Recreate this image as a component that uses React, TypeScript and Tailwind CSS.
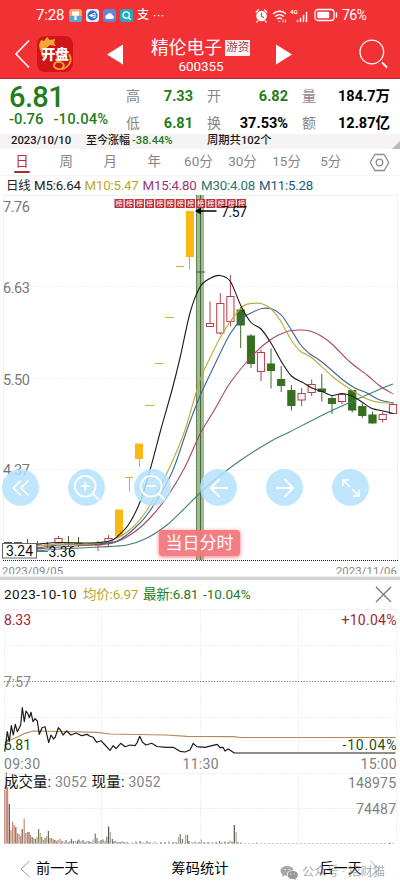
import type { ReactNode } from 'react';
import { ZoomIn, ZoomOut, ArrowLeft, ArrowRight } from 'lucide-react';

const quotes = [
  { label: '高', value: '7.33', color: 'text-[#1f7d1a]' },
  { label: '开', value: '6.82', color: 'text-[#1f7d1a]' },
  { label: '量', value: '184.7万', color: 'text-black' },
  { label: '低', value: '6.81', color: 'text-[#1f7d1a]' },
  { label: '换', value: '37.53%', color: 'text-black' },
  { label: '额', value: '12.87亿', color: 'text-black' },
];

const periods = ['日', '周', '月', '年', '60分', '30分', '15分', '5分'];

// x, high, low, body top, body bottom, rising
type Candle = [number, number, number, number, number, boolean];
const candles: Candle[] = [
  [58.5, 536, 544, 538.5, 543, true],
  [98, 541, 551, 544, 545, true],
  [108.5, 535, 547, 538.5, 543, true],
  [210, 301.5, 327, 323.5, 326.5, true],
  [220.3, 293, 334.5, 303.5, 333, true],
  [230.4, 275, 326.5, 296.5, 321.5, true],
  [240.7, 307, 348, 310, 325, false],
  [251, 334, 368, 336, 363.5, false],
  [261, 349.5, 381, 352.5, 371.5, true],
  [271, 348.5, 388.5, 364, 370.5, false],
  [281.2, 366, 392, 379.5, 385.5, false],
  [291.4, 385, 410.5, 390.5, 405.5, false],
  [301.6, 388, 406, 393.5, 400, true],
  [311.7, 379.5, 396, 384.5, 392.5, true],
  [321.8, 374, 401.5, 389, 391.5, false],
  [332, 395, 414, 398.5, 403.5, false],
  [342, 393, 404, 394.5, 401.5, true],
  [352.2, 390, 412.5, 390.5, 410, false],
  [362.3, 403.5, 418, 406.5, 415.5, false],
  [372.5, 411.5, 423.5, 415, 423, false],
  [382.7, 412, 422.5, 414.5, 419.5, true],
  [393, 402, 413.5, 404.5, 413.5, true],
];

// smoothed line through points
function smooth(pts: number[][]) {
  let d = `M${pts[0][0]} ${pts[0][1]}`;
  for (let i = 0; i < pts.length - 1; i++) {
    const p0 = pts[i - 1] ?? pts[i];
    const p1 = pts[i];
    const p2 = pts[i + 1];
    const p3 = pts[i + 2] ?? p2;
    d += `C${p1[0] + (p2[0] - p0[0]) / 7} ${p1[1] + (p2[1] - p0[1]) / 7} ${p2[0] - (p3[0] - p1[0]) / 7} ${p2[1] - (p3[1] - p1[1]) / 7} ${p2[0]} ${p2[1]}`;
  }
  return d;
}

const averages = [
  { color: '#3f8076', pts: [[37, 551], [60, 549], [100, 547], [127, 545], [147, 538], [167, 525], [183, 510], [200, 493], [217, 478], [240, 460.7], [270, 441.7], [290, 431.7], [333, 410], [378, 390], [393, 384]] },
  { color: '#a2456f', pts: [[37, 549], [60, 547], [90, 545], [113, 543], [133, 533], [150, 518], [167, 497], [185, 467], [200, 434], [215, 409], [230, 383], [253, 355], [270, 340], [287, 331.5], [300, 330], [310, 331], [322, 336.5], [333, 345], [350, 362], [367, 375], [380, 386], [393, 394]] },
  { color: '#3c6890', pts: [[37, 548], [60, 545], [90, 544], [117, 541], [140, 523], [157, 500], [173, 470], [188, 427], [200, 396], [215, 364], [230, 334], [243, 318], [253, 312], [262, 308.5], [272, 309], [283, 317], [300, 344], [310, 354], [322, 362], [343, 380], [355, 388], [367, 393], [380, 400], [393, 403]] },
  { color: '#bcaa37', pts: [[37, 546], [60, 544], [90, 544], [115, 539], [133, 527], [147, 510], [160, 487], [173, 460], [185, 430], [200, 380], [210, 358], [220, 338], [230, 322], [243, 306], [252, 303.5], [261, 303.5], [270, 308], [280, 320], [290, 338], [300, 351], [312, 358], [333, 377], [350, 389], [367, 399], [380, 402.5], [393, 403]] },
  { color: '#1a1a1a', pts: [[37, 544], [60, 542.5], [90, 543], [110, 541], [118, 536], [129, 524], [140, 502], [150, 470], [161, 429], [172, 390], [180, 358], [190, 313], [200, 287], [210, 278.5], [220, 275.5], [230.4, 281.5], [241, 306], [251, 322.5], [261, 329], [271, 343], [281, 361], [291.4, 376], [302, 382], [312, 388], [322, 391.5], [332, 395.5], [342, 393.5], [352, 396], [362, 402], [372, 408.5], [383, 411], [393, 413.5]] },
];

const price = '4.7,751.7 7.3,731.7 9.3,741.7 11.3,725.7 13.3,735 15.3,724.3 17.3,731.7 20.7,725 22.3,707.7 24.3,721.7 26,711 28,714 29.3,717.7 31,712.3 33,721.7 35,718.7 37.3,721 39.3,734.3 42,727.7 45,726.7 48.7,742.7 51,735 53.5,739 55.3,737 58.3,727.7 60.5,730 63,735 66.7,731 71,735 76,733 81.7,735.7 87,734.3 90,736.3 93.3,737.3 96.7,742.3 101,740.7 105,745 110,750.3 113.3,745.7 116,748.7 120.7,743.3 125,746.7 130,745 135,745.7 137.3,742.3 139.7,736.3 142.5,742.3 146,745 151.7,743.3 157,746.5 166,747.3 173.3,747.3 180,751.3 185,752 190,750 193.3,743.3 196.7,746.7 205,747.3 213,745.3 217.3,744.3 220,747.7 223,747.3 225,751 228.3,749 234.3,753 395.5,753';
const avgPrice = '4.7,745 8.3,740.7 17,737.3 25,733.3 33,731 66,731.5 97,732.3 110,734 166,735 187,736.3 234,736.7 240,737.5 395.5,737.5';

// [x, top] of minute volume bars, baseline at 843.5
const volumes = [
  [4.8, 790], [6.3, 772], [7.6, 787], [9.3, 804], [11, 830], [12.6, 822], [14.2, 825], [15.8, 827], [17.4, 833], [19, 834], [20.6, 836], [22.2, 829], [24.2, 818.5], [25.8, 833], [27.4, 832], [29, 832], [30.6, 835], [32.2, 837], [33.8, 838], [35.4, 839], [37, 837], [38.6, 829], [40.2, 833], [41.8, 837], [43.4, 840], [45, 838], [46.6, 836], [48.4, 831], [50, 838], [51.6, 838], [53.2, 839], [54.8, 840], [56.4, 841], [58, 840], [60, 838.5],
  [62, 841], [64, 841.5], [66, 840], [68, 842], [70, 841], [71.5, 839], [73.5, 841], [75.5, 841], [77.5, 840.5], [79, 839.5], [81, 841], [83, 840], [85, 842], [87, 841], [89, 841], [91, 842], [93, 839.5], [95.2, 833.5], [97, 838], [99, 841], [101, 840], [103, 839.5], [105, 841], [106.8, 836.5], [108.6, 826.5], [110.4, 832], [112.4, 839], [114, 841], [116, 840.5], [118, 842], [120, 842], [122, 841], [124, 842],
  [127, 842], [132, 842.5], [136, 841.5], [140, 841], [143, 842], [147, 841], [150, 842], [155, 841.5], [161, 842], [165, 842], [169, 841], [173, 842], [176, 842], [178.5, 837], [180.3, 834], [182.5, 839], [185.5, 834.5], [187.5, 835], [189, 841], [192, 842], [195, 841.5], [199, 842], [201.3, 839.5], [204, 842], [208, 842], [212, 842], [216, 842], [219.5, 841], [222, 842], [225, 841.5], [228, 842], [230, 840.5], [232, 841.5], [234.3, 825], [236.2, 832], [238, 842], [241, 842.5], [257, 842.5], [390, 842.5],
];

function volumeColor(x: number, i: number) {
  if (x === 234.3 || x === 108.6 || x === 9.3) return '#55524a';
  if (x > 60) return i % 3 ? '#77736b' : '#aaa79f';
  if (x > 31 && x < 48) return i % 2 ? '#77805c' : '#b9a184';
  return i % 4 === 3 ? '#766456' : '#c38976';
}

function StatusBar() {
  return (
    <div className="flex h-[30px] items-center pl-9 pr-8">
      <span className="w-[33px] text-[15px] tracking-[-0.2px]">7:28</span>
      <div className="flex items-center gap-[4px]">
        <svg className="size-[13px]" viewBox="0 0 13 13">
          <rect width="13" height="13" rx="3" fill="#e9ad73" />
          <path d="M0 7h13v3a3 3 0 0 1-3 3H3a3 3 0 0 1-3-3z" fill="#58a5d8" />
          <path d="M3 2.5h7v4H7.5V11h-2V6.5H3z" fill="#fff" />
        </svg>
        <svg className="size-[13px]" viewBox="0 0 13 13">
          <rect width="13" height="13" rx="3" fill="#e8f1fb" />
          <circle cx="6.5" cy="6.5" r="5" fill="#2a75c7" />
          <path d="M3.5 6.5 9 4v5z M3.5 6.5h5" fill="none" stroke="#fff" strokeWidth="1" />
        </svg>
        <svg className="size-[13px]" viewBox="0 0 13 13">
          <rect width="13" height="13" rx="3" fill="#6286dc" />
          <path d="M4 10a2.2 2.2 0 0 1 0-4.300a3 3 0 0 1 5.500.5A2 2 0 0 1 9.500 10z" fill="#fff" />
        </svg>
        <svg className="size-[13px]" viewBox="0 0 13 13">
          <rect width="13" height="13" rx="3" fill="#25a8c1" />
          <circle cx="6.2" cy="6" r="3.200" fill="none" stroke="#fff" strokeWidth="1.300" />
          <path d="m8.500 8.500 2.200 2.200" stroke="#fff" strokeWidth="1.300" />
        </svg>
        <span className="text-xs font-medium leading-none">支</span>
        <span className="text-[13px] leading-none tracking-[0.5px]">···</span>
      </div>
      <div className="ml-auto flex items-center">
        <svg className="h-[15px] w-[54px]" viewBox="0 0 54 15" fill="none" stroke="#fff" strokeLinecap="round">
          <circle cx="6.500" cy="8" r="5.300" fill="#fff" stroke="none" />
          <path d="M1.200 4 3.500 1.800M11.800 4 9.500 1.800M2.800 13l-1 1M10.200 13l1 1" strokeWidth="1.200" />
          <path d="M6.500 5v3.200l2 1.300" stroke="#e5484b" strokeWidth="1.200" />
          <path d="M18.500 5.500a9 9 0 0 1 12 0M20.500 8.300a6 6 0 0 1 8 0M22.500 10.700a3.500 3.500 0 0 1 4 0" strokeWidth="1.500" />
          <path d="M24 13.300h1M28 12v2M30.500 12v2" strokeWidth="1" />
          <text x="35" y="6" fill="#fff" stroke="none" fontSize="6" fontWeight="700">4G</text>
          <path d="M42.500 12.500v1M45.500 10.500v3M48.500 7.500v6M51.500 4.500v9" strokeWidth="1.500" />
        </svg>
        <svg className="ml-[5px] mr-1 h-[14px] w-6" viewBox="0 0 24 14" fill="none" stroke="#fff">
          <rect x="1" y="1.500" width="19" height="11" rx="3" strokeWidth="1.300" />
          <rect x="3.200" y="3.700" width="12" height="6.600" rx="1" fill="#fff" stroke="none" />
          <path d="M22.500 5v4" strokeWidth="1.500" strokeLinecap="round" />
        </svg>
        <span className="w-[26px] whitespace-nowrap text-[14px] tracking-[-0.6px]">76%</span>
      </div>
    </div>
  );
}

function Header() {
  return (
    <header className="h-[79px] border-b border-[#c9262c] bg-[#f23134] text-white">
      <StatusBar />
      <div className="flex h-[48px] items-center">
        <svg className="ml-[14px] h-[30px] w-4" viewBox="0 0 16 30" fill="none" stroke="#fff" strokeWidth="1.600">
          <path d="M15 1.500 2 15l13 13.500" />
        </svg>
        <div className="relative ml-[7px] flex size-9 items-center justify-center overflow-hidden rounded-lg bg-[#cf1519]">
          <svg className="absolute inset-0 size-9" viewBox="0 0 36 36" fill="none">
            <path d="M2 9 4 4l3 1 3-4 3 3 5-1-1 4 2 3-6-1-5 4-5 1z" fill="#f2aa35" />
            <path d="M4 12c2 5 1 7 3 9" stroke="#efa42f" strokeWidth="2.500" />
            <path d="M32 18c5 9-3 16-11 15-6-1-5-8 2-7 4 1 5 4 2 6" stroke="#f5a52c" strokeWidth="1.800" />
          </svg>
          <span className="relative whitespace-nowrap text-[14px] font-black leading-none tracking-[-0.5px]">开盘</span>
        </div>
        <svg className="ml-[33px] h-[21px] w-[18px]" viewBox="0 0 18 21" fill="#fff">
          <path d="M1 10.500 17 .5v20z" />
        </svg>
        <div className="ml-[27px] flex w-[100px] flex-col items-center pt-px">
          <div className="flex h-[22px] w-full items-center gap-[3px] whitespace-nowrap">
            <h1 className="text-[17.800px] leading-none">精伦电子</h1>
            <span className="flex h-4 w-[25px] items-center justify-center bg-[#fff2f3] text-[11.500px] leading-none text-[#99484d]">游资</span>
          </div>
          <span className="text-[13.500px] leading-[14px] tracking-[-0.1px]">600355</span>
        </div>
        <svg className="ml-[24px] h-[21px] w-[18px]" viewBox="0 0 18 21" fill="#fff">
          <path d="M17 10.500 1 .5v20z" />
        </svg>
        <svg className="ml-[66px] size-[30px]" viewBox="0 0 30 30" fill="none" stroke="#fff" strokeWidth="1.300">
          <circle cx="12.800" cy="13" r="11.800" />
          <path d="m23 23.500 5 5" strokeWidth="1.800" />
        </svg>
      </div>
    </header>
  );
}

function QuoteSummary() {
  return (
    <section className="flex h-[55px] pl-[9px] pr-[10px]">
      <div className="w-[117px] text-[#1f7d1a]">
        <div className="flex h-[32px] items-center pt-[5px] text-[29px] font-medium leading-none tracking-[-0.6px]">6.81</div>
        <div className="flex gap-[10px] whitespace-nowrap text-[14.800px] font-medium leading-[16px]">
          <span>-0.76</span>
          <span className="tracking-[0.2px]">-10.04%</span>
        </div>
      </div>
      <div className="grid flex-1 grid-cols-[67px_81px_88px] grid-rows-[27px_27px] gap-x-[14px] pt-1">
        {quotes.map((q) => (
          <div key={q.label} className="flex items-center justify-between whitespace-nowrap">
            <span className="text-[14px] text-[#858585]">{q.label}</span>
            <span className={`text-[14.500px] font-bold ${q.color}`}>{q.value}</span>
          </div>
        ))}
      </div>
    </section>
  );
}

function PeriodTabs() {
  return (
    <nav className="flex h-[27px] items-center border-b border-[#f3f3f3] text-[13.500px] text-[#858585]">
      {periods.map((p, i) => (
        <div key={p} className="flex h-full w-[44.100px] flex-col items-center whitespace-nowrap">
          <span className={i === 0 ? 'leading-[25px] text-[#bd302c]' : 'leading-[25px]'}>{p}</span>
          {i === 0 && <span className="-mt-[3px] h-[2px] w-4 shrink-0 rounded bg-[#b6282b]" />}
        </div>
      ))}
      <svg className="ml-4 h-[19px] w-[21px]" viewBox="0 0 21 19" fill="none" stroke="#8c8c8c" strokeWidth="1.300">
        <path d="M5.800 1.500h9.400l4.600 8-4.600 8H5.800l-4.600-8z" strokeLinejoin="round" />
        <circle cx="10.500" cy="9.500" r="3.300" />
      </svg>
    </nav>
  );
}

function ToolButton({ children }: { children: ReactNode }) {
  return (
    <button className="flex size-[37px] items-center justify-center rounded-full bg-[#b4e2fd]/85 text-white">{children}</button>
  );
}

function DailyChart() {
  return (
    <section className="relative h-[381px]">
      <svg className="block h-[381px] w-full" viewBox="0 195 400 381" fill="none">
        <g stroke="#f1f1f1">
          <path d="M3 195.500h395M397.500 195v365M3.500 195v365" />
          <path d="M32 286.500h366M32 378.500h366M32 469.500h366" strokeDasharray="2 1" />
        </g>
        <g stroke="#3d5c2d">
          <path d="M27.500 539v7M47.500 542v6M68.500 536v10M78.500 537v10" />
          <path d="M4 542.500h8M14 542.500h8M64 543h9M74 543.500h9M84 545h9" />
        </g>
        <path d="M37.500 541v10M34 545h8M44 545h8" stroke="#a3444d" />
        <rect x="196" y="195" width="8" height="365" fill="#9dbd8b" />
        <path d="M196.500 195v365" stroke="#66805b" />
        <path d="M200.500 195v365" stroke="#4b6442" />
        <path d="M196 272h9" stroke="#3e5a3a" />
        {candles.map(([x, high, low, top, bottom, up]) => (
          <g key={x} stroke={up ? '#b0414f' : '#3c6a2c'}>
            <path d={`M${x} ${high}V${top}M${x} ${bottom}V${low}`} />
            <rect x={x - 3.6} y={top} width="7.2" height={bottom - top} fill={up ? '#fff7f7' : '#35701c'} />
          </g>
        ))}
        <g fill="#fbb813">
          <rect x="186" y="211" width="8" height="46" />
          <rect x="135" y="443.500" width="8" height="15.500" />
          <rect x="115" y="509.500" width="8" height="27" />
        </g>
        <path d="M189.500 257v12.500M139.500 459v8M176 266.500h8M165.500 317.500h8.500M155 363.500h8.500M145 405.500h9M125 477.500h8M129.500 478v13.500" stroke="#cdb02a" />
        {averages.map((a) => (
          <path key={a.color} d={smooth(a.pts)} stroke={a.color} strokeWidth="1.100" />
        ))}
        {Array.from({ length: 13 }, (_, i) => (
          <g key={i}>
            <rect x={114.5 + i * 10.2} y="199" width="9" height="9" fill="#bb2f35" />
            <text x={119 + i * 10.2} y="206.200" fontSize="7" fill="#fff" textAnchor="middle">榜</text>
          </g>
        ))}
        <path d="M198 211h18.500" stroke="#000" strokeWidth="1.500" />
        <path d="m195 211 6-3.500v7z" fill="#000" />
        <g fontSize="14.500" fill="#777">
          <text x="3" y="211.500" textLength="27">7.76</text>
          <text x="3" y="293" textLength="27">6.63</text>
          <text x="3" y="384.500" textLength="27">5.50</text>
          <text x="3" y="475" textLength="27">4.37</text>
        </g>
        <text x="221" y="217" fontSize="14" fill="#111" textLength="26">7.57</text>
        <rect x="2.500" y="543.500" width="34" height="14.500" fill="#fff" stroke="#666" />
        <text x="6" y="556" fontSize="14" fill="#111" textLength="27">3.24</text>
        <path d="M37 551.500h11" stroke="#4d8572" />
        <text x="48.500" y="556.500" fontSize="14" fill="#111" textLength="27">3.36</text>
        <path d="M3 560.500h395" stroke="#222" strokeDasharray="1 1" />
      </svg>
      <div className="absolute inset-x-0 bottom-[2px] flex h-[10px] justify-between overflow-hidden pl-[2px] pr-[3px] text-[11.300px] leading-[15px] tracking-[0.1px] text-[#888]">
        <span>2023/09/05</span>
        <span>2023/11/06</span>
      </div>
      <div className="absolute left-[2px] top-[274px] flex w-[367px] justify-between">
        <ToolButton>
          <svg className="size-5" viewBox="0 0 20 20" fill="none" stroke="currentColor" strokeWidth="1.700">
            <path d="M10 2.500 2.500 10l7.500 7.500M17.500 2.500 10 10l7.500 7.500" />
          </svg>
        </ToolButton>
        <ToolButton><ZoomIn className="shrink-0" size={31} strokeWidth={1.400} /></ToolButton>
        <ToolButton><ZoomOut className="shrink-0" size={31} strokeWidth={1.400} /></ToolButton>
        <ToolButton><ArrowLeft size={28} strokeWidth={1.700} /></ToolButton>
        <ToolButton><ArrowRight size={28} strokeWidth={1.700} /></ToolButton>
        <ToolButton>
          <svg className="size-5" viewBox="0 0 20 20" fill="none" stroke="currentColor" strokeWidth="1.500">
            <path d="M2 8V2h6M2 2l7 7M18 12v6h-6M18 18l-7-7" />
          </svg>
        </ToolButton>
      </div>
      <button className="absolute left-[159px] top-[335px] h-[26px] w-[81px] rounded-[3px] bg-[#f2777d]/95 text-[17px] leading-[25px] text-white shadow-[0_1px_4px_#f2777d]">当日分时</button>
    </section>
  );
}

function IntradayPanel() {
  return (
    <section className="h-[269px]">
      <div className="flex h-[28px] items-center whitespace-nowrap pl-[4px] pr-[8px] text-[13.500px]">
        <span className="w-[79px] tracking-[0.5px] text-[#111]">2023-10-10</span>
        <span className="w-[60px] tracking-[-0.200px] text-[#b9a72d]">均价:6.97</span>
        <span className="w-[60px] tracking-[-0.200px] text-[#257a20]">最新:6.81</span>
        <span className="text-[#257a20]">-10.04%</span>
        <svg className="ml-auto size-[17px]" viewBox="0 0 17 17" stroke="#777" strokeWidth="1.300">
          <path d="m1 1 15 15M16 1 1 16" />
        </svg>
      </div>
      <svg className="block h-[241px] w-full" viewBox="0 608 400 241" fill="none">
        <g stroke="#eee" strokeDasharray="2 1">
          <path d="M4 609.500h392M4 645.500h392M4 717.500h392M4.500 609v144M101.500 609v144M200.500 609v144M298.500 609v144M396.500 609v144" />
          <path d="M4 773.500h392M4 808.500h392M4.500 773v71M101.500 773v71M200.500 773v71M298.500 773v71M396.500 773v71" />
        </g>
        <path d="M4 681.500h392" stroke="#777" strokeDasharray="1.200 1.600" />
        <path d="M4 843.500h392" stroke="#ccc" strokeDasharray="2 2" />
        {volumes.map(([x, top], i) => (
          <path key={x} d={`M${x} 843.500V${top}`} stroke={volumeColor(x, i)} strokeWidth="1.200" />
        ))}
        <g fontSize="14">
          <text x="4" y="625" fill="#a32431" textLength="27">8.33</text>
          <text x="341.500" y="625" fill="#a32431" textLength="55">+10.04%</text>
          <text x="4" y="686.500" fill="#858585" textLength="27">7:57</text>
          <text x="4" y="749.500" fill="#24510f" textLength="27">6.81</text>
          <text x="342.500" y="749.500" fill="#24510f" textLength="54">-10.04%</text>
        </g>
        <g fontSize="14" fill="#808080">
          <text x="4" y="768.500" textLength="36">09:30</text>
          <text x="182.500" y="768.500" textLength="36">11:30</text>
          <text x="360.500" y="768.500" textLength="36">15:00</text>
          <text x="348" y="788" textLength="48">148975</text>
          <text x="356" y="814" textLength="40">74487</text>
        </g>
        <text x="4" y="787" fontSize="14.500" fill="#111" textLength="47">成交量:</text>
        <text x="55" y="787" fontSize="14" fill="#858585" textLength="32">3052</text>
        <text x="91.500" y="787" fontSize="14.500" fill="#111" textLength="33">现量:</text>
        <text x="128.500" y="787" fontSize="14" fill="#858585" textLength="32">3052</text>
        <polyline points={avgPrice} stroke="#b28a5a" strokeWidth="1.200" />
        <polyline points={price} stroke="#1c1c1c" strokeWidth="1.200" strokeLinejoin="round" />
      </svg>
    </section>
  );
}

function Footer() {
  return (
    <footer className="relative grid h-10 grid-cols-[133px_134px_133px] items-center text-[14.200px] text-black">
      <div className="flex items-center gap-[6px] pl-5">
        <svg className="h-[18px] w-[10px]" viewBox="0 0 10 18" fill="none" stroke="#999">
          <path d="M9.500 1 1 9l8.500 8" />
        </svg>
        <span>前一天</span>
      </div>
      <span className="text-center">筹码统计</span>
      <div className="flex items-center justify-end gap-[8px] pr-5">
        <span>后一天</span>
        <svg className="h-[18px] w-[10px]" viewBox="0 0 10 18" fill="none" stroke="#aaa">
          <path d="M.5 1 9 9l-8.500 8" />
        </svg>
      </div>
      <div className="absolute left-[280px] top-[14px] flex items-center gap-[4px] whitespace-nowrap text-[12.300px] text-[#888]/70">
        <svg className="h-[15px] w-[18px]" viewBox="0 0 18 15">
          <path d="M7 1c4 0 6.500 2.300 6.500 4.500C9 5 6 7.500 7 10.700L4.500 10.500 2 12l.5-2.500C-1 7 0 1 7 1z" fill="#a7a7a7" />
          <path d="M12.200 6c7 0 7 6 3.300 7.500l.3 1.500-2-1C6 15 5.500 6 12.200 6z" fill="#989898" />
          <path d="M4.500 4.500h1M8.800 4.500h1M10.300 9h1M13.800 9h1" stroke="#fff" strokeWidth="1.200" />
        </svg>
        <span>公众号 · 招财猫</span>
      </div>
    </footer>
  );
}

export default function App() {
  return (
    <main className="h-[889px] w-[400px] overflow-hidden bg-white font-['Roboto','Noto_Sans_CJK_SC',sans-serif]">
      <Header />
      <QuoteSummary />
      <div className="flex h-[15px] items-center whitespace-nowrap bg-[#f6f3f5] pl-[11px] text-[11px] font-medium text-[#181818]">
        <span className="w-[75px] text-[11.300px]">2023/10/10</span>
        <span className="w-[46px]">至今涨幅</span>
        <span className="w-[75px] text-[11.200px] text-[#257a20]">-38.44%</span>
        <span className="text-[11.300px]">周期共102个</span>
        <svg className="ml-auto size-2 self-end" viewBox="0 0 8 8" fill="#bbb">
          <path d="M8 0v8H0z" />
        </svg>
      </div>
      <PeriodTabs />
      <div className="flex h-[19px] items-center whitespace-nowrap pl-[6px] pt-px text-[13.300px] tracking-[-0.200px]">
        <span className="w-[28px] text-[12.500px] text-[#222]">日线</span>
        <span className="w-[50.500px] text-[#222]">M5:6.64</span>
        <span className="w-[58px] text-[#b9a72d]">M10:5.47</span>
        <span className="w-[58.500px] text-[#963673]">M15:4.80</span>
        <span className="w-[58px] text-[#2e7471]">M30:4.08</span>
        <span className="text-[#1e5c80]">M11:5.28</span>
      </div>
      <DailyChart />
      <div className="h-1 border-t border-[#eee] bg-[#d2d2d2]" />
      <IntradayPanel />
      <Footer />
    </main>
  );
}
